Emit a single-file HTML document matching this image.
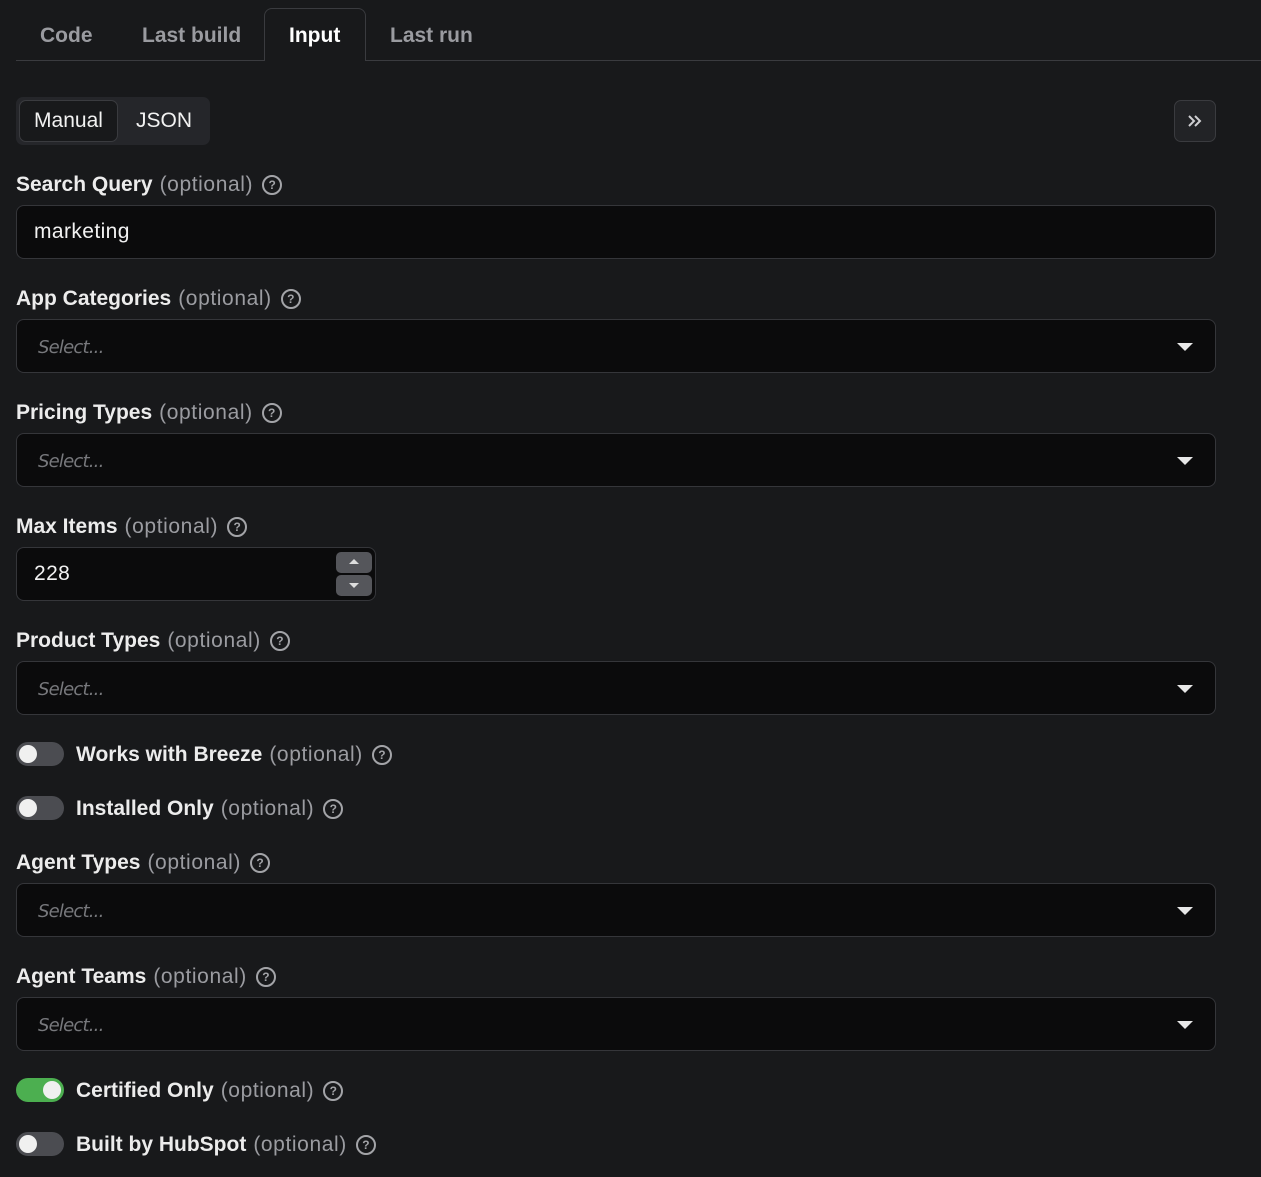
<!DOCTYPE html>
<html><head><meta charset="utf-8"><style>
*{box-sizing:border-box;margin:0;padding:0}
body{width:1261px;height:1177px;background:#18191b;font-family:"Liberation Sans",sans-serif;color:#f2f2f2;position:relative;overflow:hidden}
.a{position:absolute}
.tab{position:absolute;top:24px;font-size:21px;font-weight:bold;color:#9a9ba0}
.lbl{position:absolute;left:16px;font-size:21px;font-weight:bold;color:#ececec;height:28px;line-height:28px;white-space:nowrap;display:flex;align-items:center;top:0}
.lbl i{font-style:normal;font-weight:normal;color:#9b9ca1;margin-left:7px;letter-spacing:0.6px}
.q{display:inline-block;width:20px;height:20px;border:2px solid #a3a4a8;border-radius:50%;margin-left:9px;font-size:12px;font-weight:bold;color:#a3a4a8;text-align:center;line-height:16px;font-style:normal}
.inp{position:absolute;left:16px;width:1200px;height:54px;background:#0b0b0c;border:1px solid #35363a;border-radius:8px}
.sel{font-family:"DejaVu Sans",sans-serif;font-style:italic;font-size:18px;color:#77787c;position:absolute;left:21px;top:17px;letter-spacing:-0.8px}
.car{position:absolute;right:22px;top:23px;width:0;height:0;border-left:8px solid transparent;border-right:8px solid transparent;border-top:8px solid #e8e8e8}
.tg{position:absolute;left:16px;width:48px;height:24px;border-radius:12px;background:#4b4c51}
.tg::after{content:"";position:absolute;left:3px;top:3px;width:18px;height:18px;border-radius:50%;background:#f0f0f0}
.tg.on{background:#4caf50}
.tg.on::after{left:27px}
.lbl.t{left:76px}
.val{position:absolute;left:17px;top:14px;font-size:21px;letter-spacing:0.4px}
</style></head><body>
<div class="a" style="left:16px;top:60px;width:1245px;height:1px;background:#3a3b3f"></div>
<div class="a" style="left:264px;top:8px;width:102px;height:53px;border:1px solid #3a3b3f;border-bottom:none;border-radius:8px 8px 0 0;background:#18191b"></div>
<div class="tab" style="left:40px">Code</div>
<div class="tab" style="left:142px">Last build</div>
<div class="tab" style="left:289px;color:#fff">Input</div>
<div class="tab" style="left:390px">Last run</div>

<div class="a" style="left:16px;top:97px;width:194px;height:48px;background:#25262a;border-radius:7px"></div>
<div class="a" style="left:19px;top:100px;width:99px;height:42px;background:#18191b;border:1px solid #3a3b3f;border-radius:7px;font-size:21px;line-height:40px;text-align:center">Manual</div>
<div class="a" style="left:136px;top:100px;font-size:21px;line-height:42px">JSON</div>
<div class="a" style="left:1174px;top:100px;width:42px;height:42px;background:#222326;border:1px solid #3a3b3f;border-radius:7px">
<svg width="40" height="40" viewBox="0 0 40 40"><path d="M14 15l5 5-5 5M20 15l5 5-5 5" fill="none" stroke="#cfcfd2" stroke-width="2"/></svg></div>

<div class="lbl" style="top:171px">Search Query<i>(optional)</i><span class="q">?</span></div>
<div class="inp" style="top:205px"><span class="val">marketing</span></div>

<div class="lbl" style="top:285px">App Categories<i>(optional)</i><span class="q">?</span></div>
<div class="inp" style="top:319px"><span class="sel">Select...</span><span class="car"></span></div>

<div class="lbl" style="top:399px">Pricing Types<i>(optional)</i><span class="q">?</span></div>
<div class="inp" style="top:433px"><span class="sel">Select...</span><span class="car"></span></div>

<div class="lbl" style="top:513px">Max Items<i>(optional)</i><span class="q">?</span></div>
<div class="inp" style="top:547px;width:360px"><span class="val">228</span>
<div class="a" style="left:319px;top:4px;width:36px;height:21px;background:#55565b;border-radius:5px"><div class="a" style="left:13px;top:7px;border-left:5px solid transparent;border-right:5px solid transparent;border-bottom:5px solid #ddd"></div></div>
<div class="a" style="left:319px;top:27px;width:36px;height:21px;background:#55565b;border-radius:5px"><div class="a" style="left:13px;top:8px;border-left:5px solid transparent;border-right:5px solid transparent;border-top:5px solid #ddd"></div></div>
</div>

<div class="lbl" style="top:627px">Product Types<i>(optional)</i><span class="q">?</span></div>
<div class="inp" style="top:661px"><span class="sel">Select...</span><span class="car"></span></div>

<div class="tg" style="top:742px"></div>
<div class="lbl t" style="top:741px">Works with Breeze<i>(optional)</i><span class="q">?</span></div>
<div class="tg" style="top:796px"></div>
<div class="lbl t" style="top:795px">Installed Only<i>(optional)</i><span class="q">?</span></div>

<div class="lbl" style="top:849px">Agent Types<i>(optional)</i><span class="q">?</span></div>
<div class="inp" style="top:883px"><span class="sel">Select...</span><span class="car"></span></div>

<div class="lbl" style="top:963px">Agent Teams<i>(optional)</i><span class="q">?</span></div>
<div class="inp" style="top:997px"><span class="sel">Select...</span><span class="car"></span></div>

<div class="tg on" style="top:1078px"></div>
<div class="lbl t" style="top:1077px">Certified Only<i>(optional)</i><span class="q">?</span></div>
<div class="tg" style="top:1132px"></div>
<div class="lbl t" style="top:1131px">Built by HubSpot<i>(optional)</i><span class="q">?</span></div>
</body></html>
